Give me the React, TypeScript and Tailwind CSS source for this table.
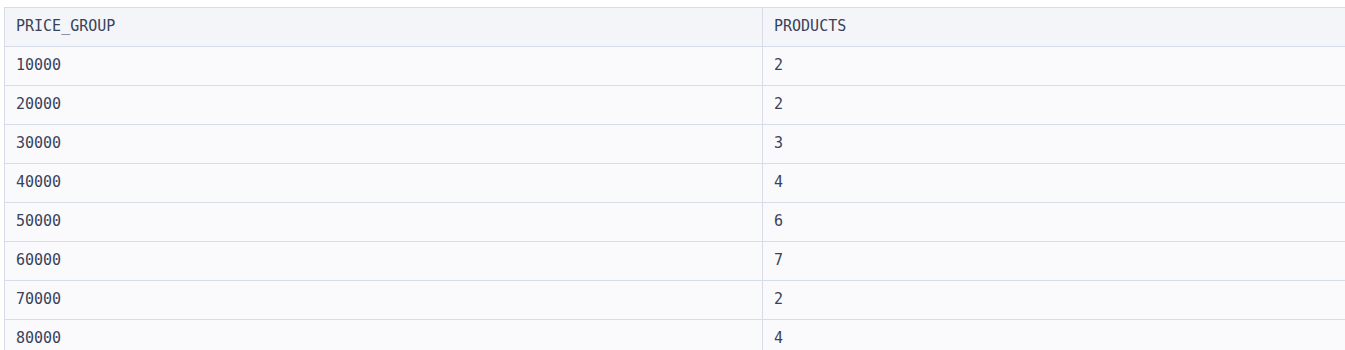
const rows: [string, string][] = [
  ["10000", "2"],
  ["20000", "2"],
  ["30000", "3"],
  ["40000", "4"],
  ["50000", "6"],
  ["60000", "7"],
  ["70000", "2"],
  ["80000", "4"],
];

export default function App() {
  return (
    <div className="h-[350px] w-[1345px] overflow-hidden bg-white pl-[4px] pt-[7px]">
      <table
        className="w-[1400px] border-collapse text-[15px] text-[#39425a]"
        style={{ fontFamily: '"DejaVu Sans Mono", monospace' }}
      >
        <thead>
          <tr className="h-[39px] bg-[#f4f5f9]">
            <th className="w-[758px] border border-[#d6dde8] px-[11px] pb-[2px] text-left font-normal">
              PRICE_GROUP
            </th>
            <th className="border border-[#d6dde8] px-[11px] pb-[2px] text-left font-normal">
              PRODUCTS
            </th>
          </tr>
        </thead>
        <tbody>
          {rows.map(([group, count]) => (
            <tr key={group} className="h-[39px] bg-[#fafafd]">
              <td className="border border-[#d6dde8] px-[11px] pb-[2px]">{group}</td>
              <td className="border border-[#d6dde8] px-[11px] pb-[2px]">{count}</td>
            </tr>
          ))}
        </tbody>
      </table>
    </div>
  );
}
